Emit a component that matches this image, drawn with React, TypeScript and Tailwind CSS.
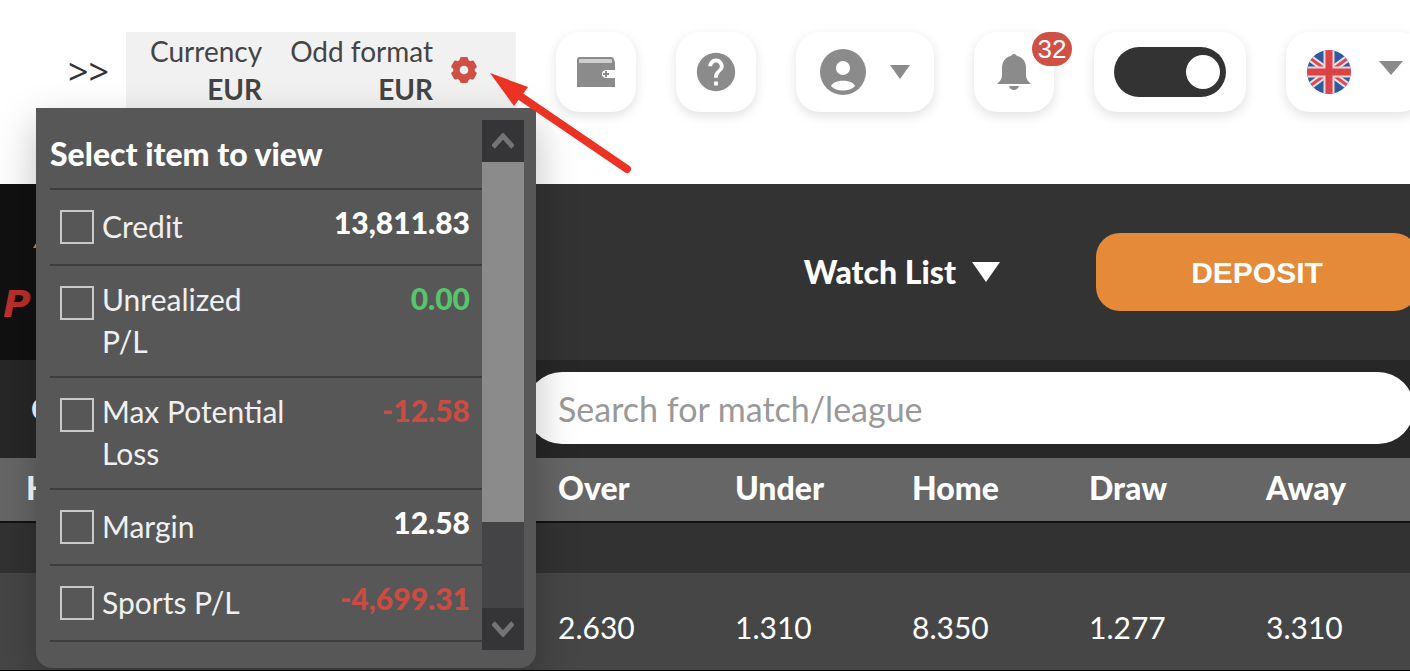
import clsx from 'clsx'
import React from 'react'
import { MdHelp } from 'react-icons/md'

type TBalance = {
  id: string
  label: string
  value: string
  tone: 'plain' | 'up' | 'down'
}

const BALANCES: TBalance[] = [
  { id: 'credit', label: 'Credit', value: '13,811.83', tone: 'plain' },
  { id: 'unrealized', label: 'Unrealized P/L', value: '0.00', tone: 'up' },
  { id: 'max-loss', label: 'Max Potential Loss', value: '-12.58', tone: 'down' },
  { id: 'margin', label: 'Margin', value: '12.58', tone: 'plain' },
  { id: 'sports', label: 'Sports P/L', value: '-4,699.31', tone: 'down' },
]

const ODDS = [
  { name: 'Over', odd: '2.630' },
  { name: 'Under', odd: '1.310' },
  { name: 'Home', odd: '8.350' },
  { name: 'Draw', odd: '1.277' },
  { name: 'Away', odd: '3.310' },
]

function GearIcon() {
  return (
    <svg viewBox="0 0 24 24" className="size-[26px]" aria-hidden="true">
      <circle cx="12" cy="12" r="7" fill="none" stroke="#cf5045" strokeWidth="6" />
      <g fill="#cf5045">
        <rect x="8" y="0" width="8" height="6" rx="2" />
        <rect x="8" y="0" width="8" height="6" rx="2" transform="rotate(60 12 12)" />
        <rect x="8" y="0" width="8" height="6" rx="2" transform="rotate(120 12 12)" />
        <rect x="8" y="0" width="8" height="6" rx="2" transform="rotate(180 12 12)" />
        <rect x="8" y="0" width="8" height="6" rx="2" transform="rotate(240 12 12)" />
        <rect x="8" y="0" width="8" height="6" rx="2" transform="rotate(300 12 12)" />
      </g>
    </svg>
  )
}

function WalletIcon() {
  return (
    <svg viewBox="0 0 38 30" className="h-[30px] w-[38px]" aria-hidden="true">
      <path d="M3 0h31q3 0 3 3l1 2v8h-8q-5 0-5 4t5 4h8v9H0V3q0-3 3-3z" fill="#8b8b8b" />
      <rect x="2" y="2" width="33" height="4" rx="1" fill="#cfcfcf" />
      <path d="M29 14v6M26 17h6" stroke="#8b8b8b" strokeWidth="2" />
    </svg>
  )
}

function UserIcon() {
  return (
    <svg viewBox="0 0 46 46" className="size-[46px]" aria-hidden="true">
      <circle cx="23" cy="23" r="23" fill="#8b8b8b" />
      <circle cx="23" cy="19" r="7" fill="#fff" />
      <path d="M11 37c3-7 21-7 24 0-5 6-19 6-24 0z" fill="#fff" />
    </svg>
  )
}

function BellIcon() {
  return (
    <svg viewBox="0 0 34 36" className="h-9 w-[34px]" aria-hidden="true">
      <path d="M17 0c2 0 2 1 3 2 6 1 9 6 9 12v7c0 4 2 6 5 9H0c3-3 5-5 5-9v-7C5 8 8 3 14 2c1-1 1-2 3-2z" fill="#8b8b8b" />
      <path d="M12 32h10q-1 4-5 4t-5-4z" fill="#8b8b8b" />
    </svg>
  )
}

function FlagIcon() {
  return (
    <svg viewBox="0 0 44 44" className="size-11" aria-hidden="true">
      <clipPath id="flag-round">
        <circle cx="22" cy="22" r="22" />
      </clipPath>
      <g clipPath="url(#flag-round)">
        <path d="M0 0h44v44H0z" fill="#2b5c9e" />
        <path d="M-4 3l52 38M48 3L-4 41" stroke="#e9dfe6" strokeWidth="7" />
        <path d="M-4 3l52 38M48 3L-4 41" stroke="#dc4950" strokeWidth="3" />
        <path d="M22 0v44M0 22h44" stroke="#ecd5da" strokeWidth="11" />
        <path d="M22 0v44M0 22h44" stroke="#dc4347" strokeWidth="7" />
      </g>
    </svg>
  )
}

function Caret({ className }: { className: string }) {
  return (
    <svg viewBox="0 0 20 14" preserveAspectRatio="none" className={className} aria-hidden="true">
      <path d="M0 0h20L10 14z" fill="currentColor" />
    </svg>
  )
}

function Chevron({ down = false }: { down?: boolean }) {
  return (
    <svg viewBox="0 0 22 16" className={clsx('h-4 w-[22px]', down && 'rotate-180')} aria-hidden="true">
      <path d="M1 14L11 3l10 11" fill="none" stroke="#747474" strokeWidth="5" />
    </svg>
  )
}

interface ICardProps {
  label: string
  className?: string
  children: React.ReactNode
}

function CardButton({ label, className, children }: ICardProps) {
  return (
    <button
      type="button"
      aria-label={label}
      className={clsx(
        'relative flex h-20 shrink-0 items-center justify-center rounded-3xl bg-white shadow-[0_4px_12px_rgba(0,0,0,0.12)]',
        className
      )}
    >
      {children}
    </button>
  )
}

function BalanceMenu() {
  return (
    <div className="absolute top-full -left-[90px] z-10 flex w-[500px] rounded-b-2xl bg-[#575757] pt-3 pr-3 pb-[18px] pl-[14px] text-left text-white shadow-[0_16px_40px_rgba(0,0,0,0.25)]">
      <div className="h-[530px] grow">
        <h2 className="flex h-[68px] items-center text-[32px] font-black">Select item to view</h2>
        <ul className="border-b-2 border-[#3d3d3d]">
          {BALANCES.map((item) => (
            <li key={item.id} className="flex min-h-[76px] justify-between border-t-2 border-[#3d3d3d] pr-3 pl-[10px]">
              <label htmlFor={item.id} className="flex w-[232px] gap-2 text-[30px] leading-[42px] text-[#f0f0f0]">
                <input
                  id={item.id}
                  type="checkbox"
                  className="mt-5 size-[34px] shrink-0 appearance-none border-2 border-[#c8c8c8] checked:bg-[#c8c8c8]"
                />
                <span className="self-center pt-3 pb-[14px]">{item.label}</span>
              </label>
              <span
                className={clsx(
                  'pt-4 text-[30px] leading-8 font-black',
                  item.tone === 'up' && 'text-[#56c56b]',
                  item.tone === 'down' && 'text-[#cb4c43]'
                )}
              >
                {item.value}
              </span>
            </li>
          ))}
        </ul>
      </div>
      <div className="flex h-[530px] w-[42px] flex-col bg-[#444446]">
        <button type="button" aria-label="Scroll up" className="flex h-[42px] items-center justify-center bg-[#353537]">
          <Chevron />
        </button>
        <div className="h-[360px] bg-[#8b8b8b]" />
        <button type="button" aria-label="Scroll down" className="mt-auto flex h-[42px] items-center justify-center bg-[#353537]">
          <Chevron down />
        </button>
      </div>
    </div>
  )
}

function AccountSummary() {
  return (
    <div className="relative flex h-[76px] w-[390px] shrink-0 gap-7 bg-[#f1f1f1] pl-6 text-right text-[28px] leading-[38px] text-[#444]">
      <div>
        <p>Currency</p>
        <p className="font-bold">EUR</p>
      </div>
      <div>
        <p>Odd format</p>
        <p className="font-bold">EUR</p>
      </div>
      <button type="button" aria-label="Settings" className="-ml-[10px] self-center">
        <GearIcon />
      </button>
      <BalanceMenu />
      <svg
        viewBox="0 0 144 104"
        className="pointer-events-none absolute top-[38px] left-[362px] z-20 h-[104px] w-[144px]"
        aria-hidden="true"
      >
        <path d="M26 22l113 77" stroke="#ec3323" strokeWidth="8" strokeLinecap="round" />
        <path d="M2 3l38 14-5 7-9 12z" fill="#ec3323" />
      </svg>
    </div>
  )
}

function TopBar() {
  return (
    <header className="flex h-[184px] items-start gap-10 bg-white pt-8">
      <div className="flex shrink-0">
        <button
          type="button"
          aria-label="Expand"
          className="h-20 w-[126px] pl-[68px] text-left font-['Open_Sans'] text-[36px] text-[#333]"
        >
          &gt;&gt;
        </button>
        <AccountSummary />
      </div>
      <CardButton label="Wallet" className="w-20">
        <WalletIcon />
      </CardButton>
      <CardButton label="Help" className="w-20">
        <MdHelp className="size-[46px] text-[#8b8b8b]" />
      </CardButton>
      <CardButton label="Account" className="w-[138px] gap-6">
        <UserIcon />
        <Caret className="h-[14px] w-5 text-[#8b8b8b]" />
      </CardButton>
      <CardButton label="Notifications" className="w-20">
        <BellIcon />
        <span className="absolute top-0 -right-[18px] flex h-[34px] w-10 items-center justify-center rounded-full bg-[#cf5045] font-['Liberation_Sans'] text-[26px] text-white">
          32
        </span>
      </CardButton>
      <label className="flex h-20 w-[152px] shrink-0 items-center justify-center rounded-3xl bg-white shadow-[0_4px_12px_rgba(0,0,0,0.12)]">
        <input type="checkbox" role="switch" aria-label="Dark mode" defaultChecked className="peer sr-only" />
        <span className="flex h-[50px] w-28 items-center rounded-full bg-[#333] px-[6px] peer-checked:justify-end">
          <span className="size-[34px] rounded-full bg-white" />
        </span>
      </label>
      <CardButton label="Language" className="w-[138px] gap-7">
        <FlagIcon />
        <Caret className="mb-2 h-[14px] w-6 text-[#8b8b8b]" />
      </CardButton>
    </header>
  )
}

function MainBar() {
  return (
    <div className="flex h-44 items-center bg-[#333]">
      <a
        href="#home"
        className="flex h-full w-[500px] flex-col gap-9 bg-[#111] pt-14 pl-[3px] font-['DejaVu_Sans'] text-[38px] leading-10 font-bold text-[#bb302c] italic"
      >
        <svg viewBox="0 0 16 8" className="ml-[30px] h-2 w-4 shrink-0" aria-hidden="true">
          <path d="M0 8L5 0h11v8z" fill="#d98a2b" />
        </svg>
        P
      </a>
      <button type="button" className="ml-auto flex items-center gap-4 text-[32px] font-black text-white">
        Watch List
        <Caret className="h-5 w-7" />
      </button>
      <button
        type="button"
        className="-mr-2 ml-24 h-[78px] w-[322px] rounded-3xl bg-[#e48a38] font-['Liberation_Sans'] text-[30px] font-bold text-white"
      >
        DEPOSIT
      </button>
    </div>
  )
}

function SearchBar() {
  return (
    <div className="flex h-[98px] items-start bg-[#272727] pt-3">
      <span className="w-[526px] pl-[31px] text-[30px] leading-[72px] font-bold text-white">C</span>
      <input
        type="search"
        aria-label="Search for match/league"
        placeholder="Search for match/league"
        className="-mr-1 h-[72px] grow rounded-[36px] bg-white px-8 text-[34px] text-[#333] outline-none placeholder:text-[#999]"
      />
    </div>
  )
}

function OddsTable() {
  return (
    <table className="w-full table-fixed text-left text-[30px] text-white">
      <colgroup>
        <col className="w-[558px]" />
        <col className="w-[177px]" />
        <col className="w-[177px]" />
        <col className="w-[177px]" />
        <col className="w-[177px]" />
        <col />
      </colgroup>
      <thead className="text-[32px]">
        <tr className="h-16 border-b-2 border-[#111] bg-[#666]">
          <th className="pb-1 pl-[26px] font-black">H</th>
          {ODDS.map((item) => (
            <th key={item.name} className="pb-1 font-black">
              {item.name}
            </th>
          ))}
        </tr>
      </thead>
      <tbody>
        <tr className="h-[51px] bg-[#323232]">
          <td colSpan={6} />
        </tr>
        <tr className="h-[98px] border-b-2 border-black bg-[#464646]">
          <td />
          {ODDS.map((item) => (
            <td key={item.name} className="pt-3">
              {item.odd}
            </td>
          ))}
        </tr>
      </tbody>
    </table>
  )
}

export default function App() {
  return (
    <div className="overflow-hidden bg-[#464646] font-[Lato,sans-serif]">
      <TopBar />
      <MainBar />
      <SearchBar />
      <OddsTable />
    </div>
  )
}
